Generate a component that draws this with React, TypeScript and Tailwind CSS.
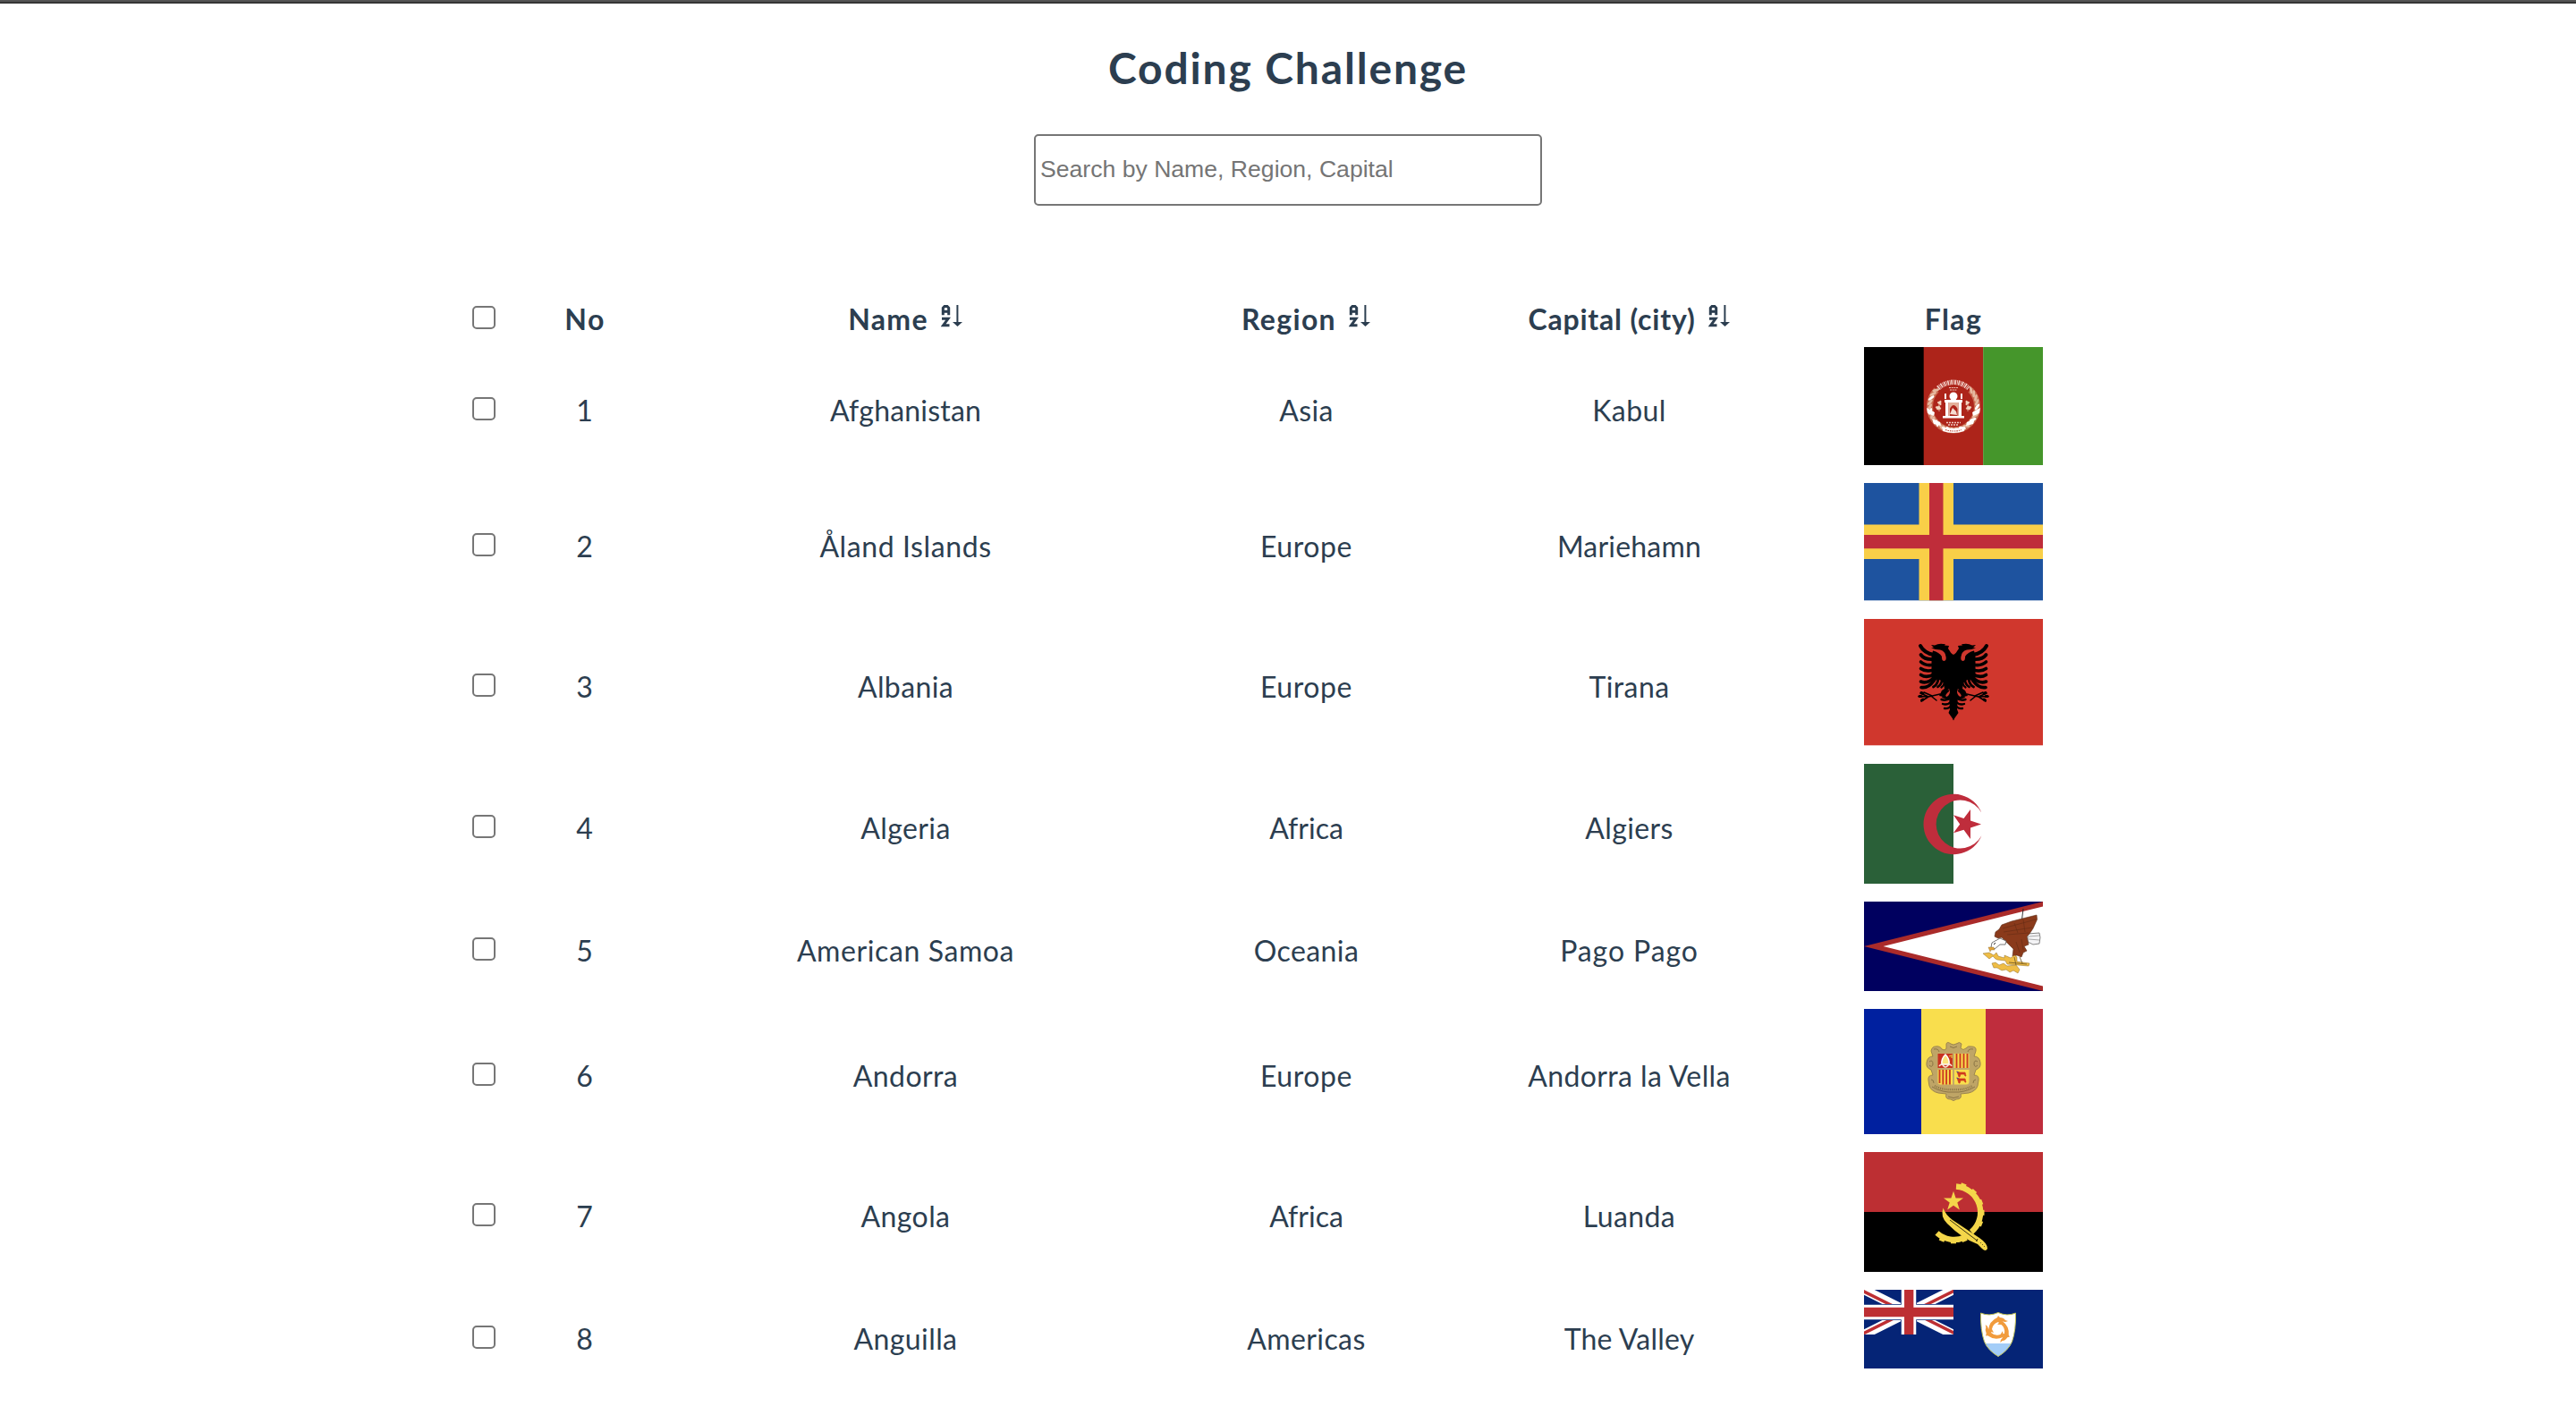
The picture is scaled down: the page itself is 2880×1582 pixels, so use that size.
import React from "react";

const FLAG = "block w-[200px]";

function AfghanistanFlag() {
  const wreath = [];
  for (let a = -42; a <= 222; a += 11) {
    const r = (a * Math.PI) / 180;
    wreath.push(
      <ellipse
        key={a}
        cx={100 + 26.5 * Math.cos(r)}
        cy={66 + 26.5 * Math.sin(r)}
        rx="1.5"
        ry="4"
        transform={`rotate(${a + 32} ${100 + 26.5 * Math.cos(r)} ${66 + 26.5 * Math.sin(r)})`}
        fill={a % 33 === 2 ? "#fff" : "#e6b9a0"}
      />
    );
  }
  return (
    <svg className={FLAG} viewBox="0 0 200 132" height="132">
      <rect width="67" height="132" fill="#000" />
      <rect x="66.7" width="66.6" height="132" fill="#ad241a" />
      <rect x="133.2" width="66.8" height="132" fill="#45962b" />
      <path d="M83 46A25 25 0 0 1 117 46" fill="none" stroke="#f3d5cd" strokeWidth="5.5" strokeDasharray="1.6 0.9 0.8 0.7" />
      <path d="M95 45.5h10M96 48h8" stroke="#eec0b6" strokeWidth="1" strokeDasharray="2 .7" />
      <path d="M81 48A26.500 26.500 0 1 0 119 48" fill="none" stroke="#c96a50" strokeWidth="7" />
      {wreath}
      <path d="M70 68l9 5-1 4-7-3zM76 80l9 4 1 4-8-2zM130 68l-9 5 1 4 7-3zM124 80l-9 4-1 4 8-2z" fill="#fff" />
      <path d="M88 94q12 4 24 0l1-5q-13 4-26 0z" fill="#fff" />
      <path d="M91 92.500q9 3 18 0" fill="none" stroke="#c0503f" strokeWidth="1.2" strokeDasharray="1.5 1" />
      <circle cx="100" cy="55" r="4.5" fill="#fff" />
      <path d="M90 59h20v3H90zM90 52h2v6h-2zM108 52h2v6h-2zM91 62h3.5v15H91zM105.500 62h3.500v15h-3.500zM88 77h24v2.500H88z" fill="#fff" />
      <path d="M94.500 62h11v15h-11z" fill="#e3b09a" />
      <path d="M96 77v-8q4-8 8.500 0v8z" fill="#ad241a" />
      <path d="M96 75l3-7 4 4 1 4z" fill="#f5dcd2" />
      <path d="M82 62l4-2v5zM84 62v10M118 62l-4-2v5zM116 62v10M80 67l4-1 2 3-4 1zM120 67l-4-1-2 3 4 1z" fill="#f3d5c0" stroke="#f3d5c0" strokeWidth=".7" />
      <path d="M92 84.500h16M94 87h12" stroke="#f0c8be" strokeWidth="1.300" strokeDasharray="2 1" />
    </svg>
  );
}

function AlandFlag() {
  return (
    <svg className={FLAG} viewBox="0 0 200 132" height="132">
      <rect width="200" height="131.3" fill="#1e539f" />
      <path d="M61.500 0H100V131.300H61.500zM0 46.500H200V85H0z" fill="#f9cf48" />
      <path d="M73 0H88.500V131.300H73zM0 58H200V73.300H0z" fill="#bf2d3a" />
    </svg>
  );
}

function EagleHalf() {
  return (
    <g>
      <path d="M100.500 40C98 40 96 36 94 33L95 30 90 29.500 91 28.300Q84 26.500 79 29.500L75 29 78 32 75 32.500Q80 34.500 85 34.500Q91 36 91.500 42Q92.500 47 89 47Q86.500 46 87 42Q84 37 77 35.500L75.500 42V66L80 68Q86 67 89 72L90 78 87 80 84 86 89 87Q92 81 95 78L97 82 95 88 100.500 90z" />
      <g fill="none" stroke="#000" strokeLinecap="round">
        <path d="M78 40Q67 38 63 30" strokeWidth="4" />
        <path d="M78 45Q68 46 63.500 40" strokeWidth="3.800" />
        <path d="M78 51Q69 53 63.500 48" strokeWidth="3.600" />
        <path d="M78 57Q69 59.500 63.500 55.500" strokeWidth="3.600" />
        <path d="M78 62Q70 66.500 63.500 62.500" strokeWidth="3.600" />
        <path d="M79 65Q71 73 63.500 70" strokeWidth="3.600" />
        <path d="M80 66Q73 78 64 76.500" strokeWidth="3.600" />
        <path d="M83 67Q82 74 77.500 76" strokeWidth="2.800" />
        <path d="M87 68Q87 73 82.500 76" strokeWidth="2.600" />
        <path d="M90 71Q89 75 86.500 76.500" strokeWidth="2.200" />
        <path d="M85 84L72 87 61 86.500M72 87L63 83M72 87L64 92M76 86L67 82M76 87L81 91" strokeWidth="1.500" />
        <path d="M62 86.500h2M64 82.500l2 .8M64.500 91l1.500-1" strokeWidth="3" />
        <path d="M97 88Q92 92 86.500 90" strokeWidth="2.400" />
        <path d="M98 92Q93 97 88 95" strokeWidth="2.400" />
        <path d="M98 96Q95 101 90 100" strokeWidth="2.400" />
      </g>
      <path d="M92 80Q88 84 87 88L93 90 100.500 84V78z" />
      <path d="M95 81Q89 86 92.500 87Q96.500 85 96 79z" fill="#d0372d" />
      <path d="M95 86H100.500V113.500L94.500 105 96 101z" />
    </g>
  );
}

function AlbaniaFlag() {
  return (
    <svg className={FLAG} viewBox="0 0 200 142" height="142">
      <rect width="200" height="141.300" fill="#d0372d" />
      <EagleHalf />
      <g transform="translate(200 0) scale(-1 1)">
        <EagleHalf />
      </g>
    </svg>
  );
}

function AlgeriaFlag() {
  return (
    <svg className={FLAG} viewBox="0 0 200 134" height="134">
      <rect width="100" height="134" fill="#2a6038" />
      <path d="M131.300 54.500A33.700 33.700 0 1 0 131.300 80.500A27 27 0 1 1 131.300 54.500z" fill="#bf2d3c" />
      <path d="M131 67.400L119 71.500V84L111.500 73.800 100 77.200 107.200 67.400 100 57.200 111.500 61 119 51V63.500z" fill="#bf2d3c" />
    </svg>
  );
}

function AmericanSamoaFlag() {
  return (
    <svg className={FLAG} viewBox="0 0 200 100" height="100">
      <rect width="200" height="100" fill="#00005f" />
      <path d="M0 50L200 0V100z" fill="#aa2b2a" />
      <path d="M21.500 50L200 5.400V94.600z" fill="#fff" />
      <path d="M178 8L176 24" stroke="#222" strokeWidth=".9" />
      <path d="M183 36L196 35 197 40 196 47 189 48 183 45z" fill="#f4f4f6" stroke="#555" strokeWidth=".7" />
      <path d="M184 39l12-1M184 42l12 1" stroke="#777" strokeWidth=".6" />
      <path d="M146 39L147 34 151 31 154 26 165 22 193 15 193.500 20 189 30 185 36 182 39 184 48 179 50 182 55 178 57 176 62 171 60 166 61 167 53 161 47 154 40 150 41z" fill="#8a3a1b" stroke="#5a2a14" strokeWidth=".6" />
      <path d="M155 30L192 20M156 34L188 29M160 37L184 35M168 24L172 35M178 20L180 34M170 45l4 12M176 42l2 12" stroke="#642c14" strokeWidth=".6" fill="none" />
      <path d="M152 41L159 44 158 48 152 48 146 53 142 51 143 46z" fill="#fff" stroke="#555" strokeWidth=".8" />
      <path d="M147 46l-2 2" stroke="#222" strokeWidth="1" />
      <path d="M139 51L145 51 146 54 142 54 141 56z" fill="#e0a23a" stroke="#8a6a2a" strokeWidth=".4" />
      <path d="M133 58L140 57 145 60 148 57 150 61 157 63 157 60 164 63 168 60 171 62 171 67 185 69 184 72 172 71 160 70 158 66 149 65 147 64 144 61 140 64z" fill="#efbd45" stroke="#8e6d25" strokeWidth=".5" />
      <path d="M143 69L147 68 151 71 156 69 160 72 170 71 174 76 172 80 167 77 163 79 159 76 154 77 149 74 145 74z" fill="#efbd45" stroke="#8e6d25" strokeWidth=".5" />
      <path d="M168 62l2 9M174 62l3 7M162 68l20 2" stroke="#6b5222" strokeWidth=".8" />
    </svg>
  );
}

function AndorraFlag() {
  return (
    <svg className={FLAG} viewBox="0 0 200 140" height="140">
      <rect width="64" height="140" fill="#00209f" />
      <rect x="64" width="72" height="140" fill="#f9de4d" />
      <rect x="136" width="64" height="140" fill="#bf2d3d" />
      <path
        d="M92 39Q93 36 97 39Q100 41 103 39Q107 36 109 39L108 44Q111 47 114 44Q116 41 120 42Q126 42 125 47L123 53Q129 53 130 60Q131 66 125 68L123 74Q129 74 128 80L127 86Q125 92 117 94L108 95Q110 101 103 101Q100 104 97 101Q90 101 92 95L83 94Q75 92 73 86L72 80Q71 74 77 74L75 68Q69 66 70 60Q71 53 77 53L75 47Q76 42 80 42Q85 41 87 45Q91 47 92 44z"
        fill="#bfa566"
        stroke="#96804d"
        strokeWidth=".9"
      />
      <path d="M96 42q4 3 8 0M78 45q5-1 6 3M122 45q-5-1-6 3M73 59q4-3 4 3q-1 4-4 1M127 59q-4-3-4 3q1 4 4 1M75 79q3 0 3 4M125 79q-3 0-3 4M76 87Q88 94 100 93Q112 94 124 87M94 98q6 3 12 0" fill="none" stroke="#8b7546" strokeWidth="1" />
      <path d="M79 86Q88 91 100 90Q112 91 121 86" fill="none" stroke="#8b7546" strokeWidth="2.200" strokeDasharray="1 1.200" />
      <path d="M81.500 49H118.500V82Q118.500 85.500 114 85.500H86Q81.500 85.500 81.500 82z" fill="#c4a868" />
      <rect x="82.500" y="50" width="16.500" height="16" fill="#c8321f" />
      <path d="M87 62Q86 56 91 51Q96 56 95 62z" fill="#fbe27a" stroke="#fff" strokeWidth="1.500" />
      <path d="M84 64q3-4 5 0q2 2 4 0q3-4 5 0" fill="none" stroke="#f7e9d8" strokeWidth="1.500" />
      <path d="M95 53l3-1v3" fill="none" stroke="#e6b23c" strokeWidth="1.300" />
      <rect x="101" y="50" width="16.500" height="16" fill="#f9de4d" />
      <path d="M103.500 50v16M107.500 50v16M111.500 50v16M115.500 50v16" stroke="#cc3a22" strokeWidth="1.900" />
      <path d="M82.500 68H99V84.500H86Q82.500 84.500 82.500 81z" fill="#f9de4d" />
      <path d="M84.500 68v15M88.300 68v16.500M92.100 68v16.500M95.900 68v16.500" stroke="#cc3a22" strokeWidth="1.900" />
      <path d="M101 68H117.500V81Q117.500 84.500 114 84.500H101z" fill="#f9de4d" />
      <path d="M104 70l3 1h6l1 4h-1l-1-2h-4l-1 3h-1l-1-3zM104 77l3 1h6l1 4h-1l-1-2h-4l-1 3h-1l-1-3z" fill="#cf3a1e" stroke="#cf3a1e" strokeWidth=".7" />
      <path d="M103.500 70l2 1M103.500 77l2 1" stroke="#3454a8" strokeWidth="1" />
    </svg>
  );
}

function AngolaFlag() {
  const teeth = [-70, -46, -21, 0, 22, 90, 113, 68];
  return (
    <svg className={FLAG} viewBox="0 0 200 134" height="134">
      <rect width="200" height="67.500" fill="#bd2f33" />
      <rect y="67" width="200" height="67" fill="#000" />
      <path d="M103 38.500A29 29 0 0 1 120 89.500M81.500 90.500A29 29 0 0 0 112.500 95.500" fill="none" stroke="#f4d64a" strokeWidth="6.300" />
      {teeth.map((a) => (
        <rect key={a} x="129" y="64.800" width="5.500" height="6" fill="#f4d64a" transform={`rotate(${a} 100 67.800)`} />
      ))}
      <path d="M100 43.800L102.600 51.400 111 51.600 104.300 56.400 106.800 64.400 100 59.700 93.200 64.400 95.700 56.400 89 51.600 97.400 51.400z" fill="#f4d64a" />
      <path d="M88.500 62.500Q91 70 99 76L129 96Q138 102 138 108Q136 112 132 108L127 103Q110 97 93 80Q85 72 88.500 62.500z" fill="#f4d64a" />
      <path d="M96 76L127 99.500M127 97l-1.500 3" stroke="#3a3410" strokeWidth="1" fill="none" />
      <path d="M130 101l5 5" stroke="#3a3410" strokeWidth="1" strokeDasharray="1 2" />
    </svg>
  );
}

const DOLPHIN = "M-11 1Q-10 -9 -1 -13L0 -15 2 -13Q6 -13 8 -10L11 -9 8 -8Q5 -9 3 -8L2 -6 0 -8Q-6 -6 -7 0L-5 4 -8 3 -11 6 -10 2z";

function AnguillaFlag() {
  return (
    <svg className={FLAG} viewBox="0 0 200 88" height="88">
      <defs>
        <clipPath id="canton">
          <rect width="100" height="50" />
        </clipPath>
      </defs>
      <rect width="200" height="88" fill="#052476" />
      <g clipPath="url(#canton)">
        <path d="M0 0L100 50M100 0L0 50" stroke="#fff" strokeWidth="10.500" />
        <path d="M-1 1.500L49 26.500M49 24L-1 49M101 48.500L51 23.500M51 26L101 1" stroke="#bd2f33" strokeWidth="3.500" />
        <path d="M50 0V50M0 25H100" stroke="#052476" strokeWidth="18" />
        <path d="M50 0V50M0 25H100" stroke="#fff" strokeWidth="16.500" />
        <path d="M50.200 0V50M0 25H100" stroke="#bd2f33" strokeWidth="10.300" />
      </g>
      <path d="M130.500 26Q140 30 150 25.500Q160 30 169.500 26Q170 45 165.500 58Q161 68 150 74.500Q139 68 134.500 58Q130 45 130.500 26z" fill="#fff" />
      <path d="M135 60H165Q160 69 150 74.500Q140 69 135 60z" fill="#a3cdf8" />
      <path d="M130.500 26Q140 30 150 25.500Q160 30 169.500 26Q170 45 165.500 58Q161 68 150 74.500Q139 68 134.500 58Q130 45 130.500 26z" fill="none" stroke="#bfbf55" strokeWidth="1" />
      <g fill="#f19b3c">
        <path d={DOLPHIN} transform="translate(150 44)" />
        <path d={DOLPHIN} transform="translate(150 45) rotate(120)" />
        <path d={DOLPHIN} transform="translate(149 44) rotate(240)" />
      </g>
    </svg>
  );
}

function SortIcon() {
  return (
    <svg className="mb-[9px] h-[26px] w-[24px] shrink-0" viewBox="0 0 24 26" fill="none" stroke="currentColor" strokeWidth="3">
      <polyline points="2.300,12.300 2.300,4.300 4,2.500 7,2.500 8.700,4.300 8.700,12.300" />
      <line x1="2.300" y1="8.300" x2="8.700" y2="8.300" />
      <polyline points="1,16.300 8,16.300 2.500,23.800 9.500,23.800" />
      <line x1="18.400" y1="1" x2="18.400" y2="22" strokeWidth="2" />
      <polygon points="13,20 24,20 18.500,25" fill="currentColor" stroke="none" />
    </svg>
  );
}

function Checkbox() {
  return (
    <div className="flex justify-center pt-1.5">
      <input type="checkbox" className="size-[26px] appearance-none rounded-[5px] border-2 border-[#767676] bg-white" />
    </div>
  );
}

const ROW = "grid grid-cols-[82px_142px_576px_320px_402px_324px] items-center";
const HEAD = "flex items-center justify-center pt-[10px] leading-[38px] font-bold";
const CELL = "pt-[10px] pl-px text-center leading-[38px]";

type Country = {
  name: [string, string];
  region: [string, string];
  capital: [string, string];
  flag: React.ReactNode;
  height: string;
};

const WIDE = "tracking-[0.6px]";
const MID = "tracking-[0.4px]";
const SLIM = "tracking-[0.2px]";

const countries: Country[] = [
  { name: ["Afghanistan", SLIM], region: ["Asia", MID], capital: ["Kabul", MID], flag: <AfghanistanFlag />, height: "h-[132px]" },
  { name: ["Åland Islands", WIDE], region: ["Europe", WIDE], capital: ["Mariehamn", SLIM], flag: <AlandFlag />, height: "h-[132px]" },
  { name: ["Albania", MID], region: ["Europe", WIDE], capital: ["Tirana", MID], flag: <AlbaniaFlag />, height: "h-[142px]" },
  { name: ["Algeria", MID], region: ["Africa", "tracking-normal"], capital: ["Algiers", MID], flag: <AlgeriaFlag />, height: "h-[134px]" },
  { name: ["American Samoa", WIDE], region: ["Oceania", MID], capital: ["Pago Pago", "tracking-[0.9px]"], flag: <AmericanSamoaFlag />, height: "h-[100px]" },
  { name: ["Andorra", MID], region: ["Europe", WIDE], capital: ["Andorra la Vella", MID], flag: <AndorraFlag />, height: "h-[140px]" },
  { name: ["Angola", MID], region: ["Africa", "tracking-normal"], capital: ["Luanda", MID], flag: <AngolaFlag />, height: "h-[134px]" },
  { name: ["Anguilla", MID], region: ["Americas", MID], capital: ["The Valley", SLIM], flag: <AnguillaFlag />, height: "h-[100px]" },
];

export default function App() {
  return (
    <div className="h-[1582px] overflow-hidden bg-white font-['Lato',sans-serif] text-[32px] text-[#2c3e50]">
      <div className="h-1 border-b-2 border-[#353535] bg-[#545454]" />
      <h1 className="mt-[43px] text-center text-[48px] leading-[58px] font-bold tracking-[1.85px]">Coding Challenge</h1>
      <div className="mt-[45px] flex justify-center">
        <input
          type="text"
          placeholder="Search by Name, Region, Capital"
          className="h-20 w-[568px] rounded-[5px] border-2 border-[#767676] bg-white pb-0.5 pl-[5px] font-['Liberation_Sans',sans-serif] text-[26.6px] placeholder:text-[#757575]"
        />
      </div>
      <div className="mt-[98px] w-[2346px] pl-[500px]">
        <div className={`${ROW} h-12`}>
          <Checkbox />
          <div className={`${HEAD} pl-0.5 tracking-[1.6px]`}>No</div>
          <div className={`${HEAD} gap-[14px] tracking-[1.3px]`}>
            <span>Name</span>
            <SortIcon />
          </div>
          <div className={`${HEAD} gap-[14px] tracking-[1.3px]`}>
            <span>Region</span>
            <SortIcon />
          </div>
          <div className={`${HEAD} gap-[14px] tracking-[0.8px]`}>
            <span>Capital (city)</span>
            <SortIcon />
          </div>
          <div className={`${HEAD} tracking-[1.4px]`}>Flag</div>
        </div>
        <div className="mt-3 flex flex-col gap-5">
          {countries.map((c, i) => (
            <div key={c.name[0]} className={`${ROW} ${c.height}`}>
              <Checkbox />
              <div className={CELL}>{i + 1}</div>
              <div className={`${CELL} ${c.name[1]}`}>{c.name[0]}</div>
              <div className={`${CELL} ${c.region[1]}`}>{c.region[0]}</div>
              <div className={`${CELL} ${c.capital[1]}`}>{c.capital[0]}</div>
              <div className="flex justify-center self-start">{c.flag}</div>
            </div>
          ))}
        </div>
      </div>
    </div>
  );
}
